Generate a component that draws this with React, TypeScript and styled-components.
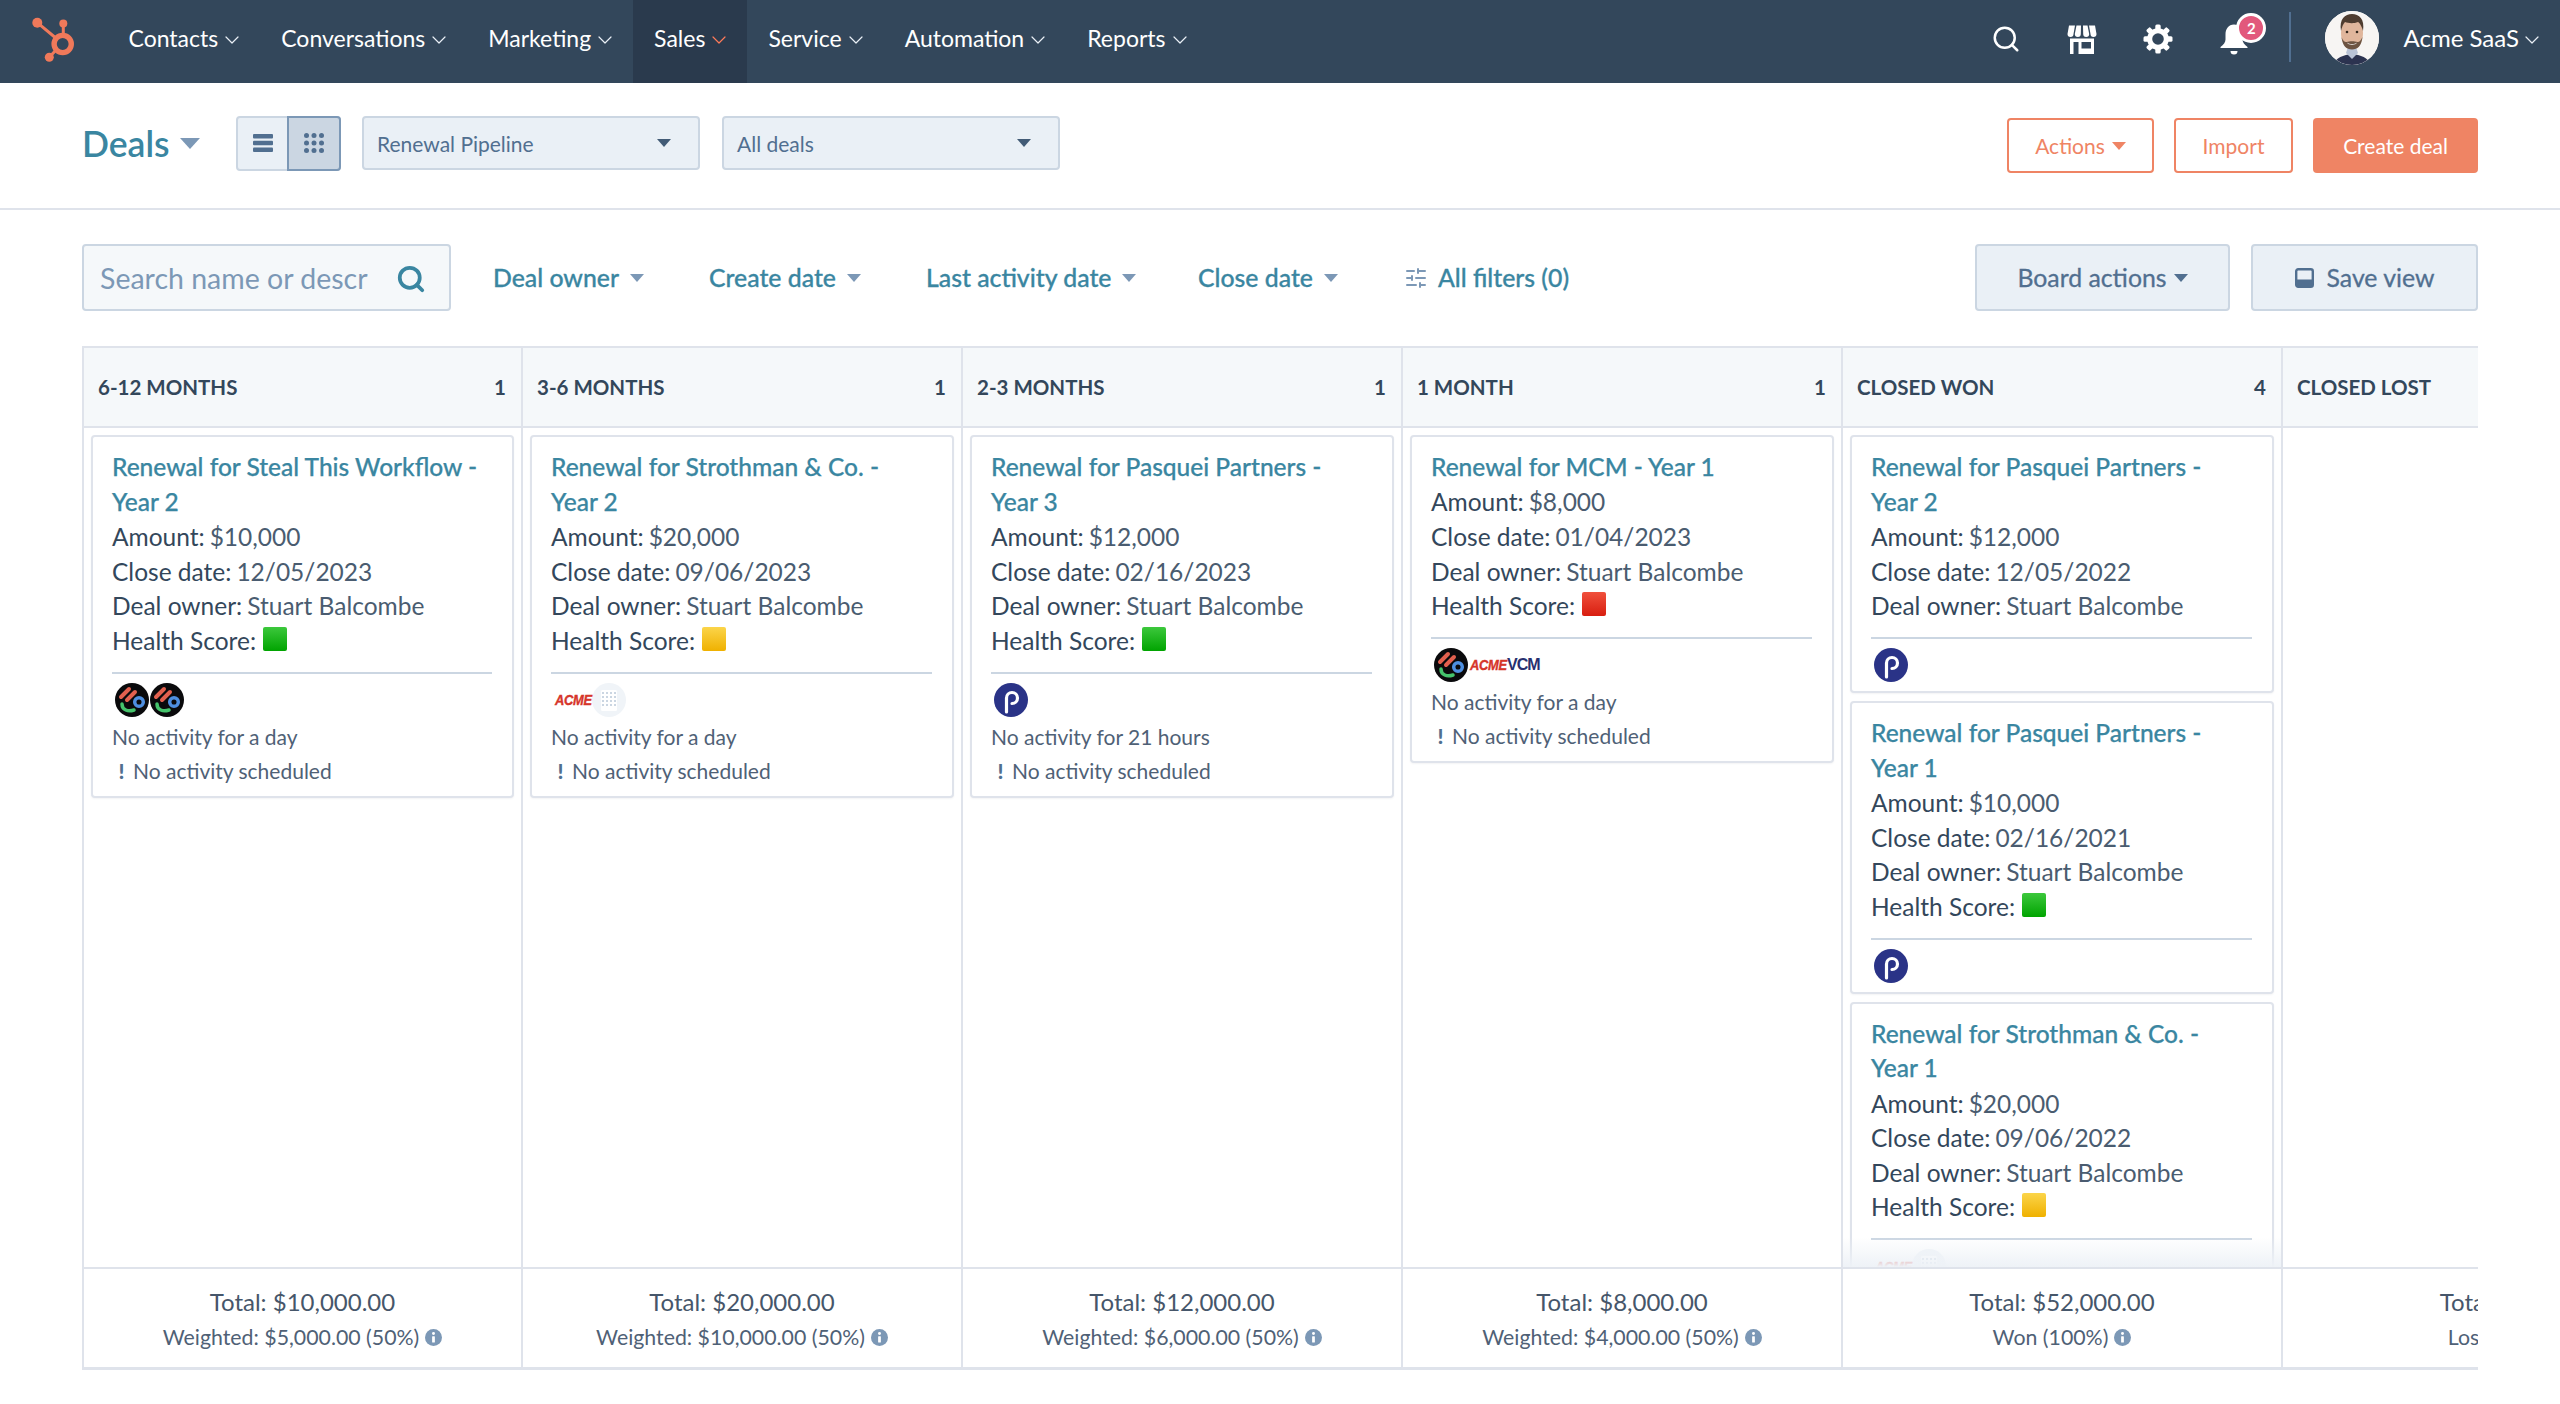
import React from 'react';
import styled, { createGlobalStyle } from 'styled-components';
import { ChevronDown, Search, SlidersHorizontal } from 'lucide-react';

const GlobalStyle = createGlobalStyle`
  html, body {
    margin: 0;
    padding: 0;
    background: #fff;
    font-family: Lato, "Noto Sans", sans-serif;
    color: #33475b;
  }
  * { box-sizing: border-box; }
`;

const Page = styled.div`
  width: 2560px;
  height: 1404px;
  overflow: hidden;
  display: flex;
  flex-direction: column;
  background: #fff;
`;

/* top navigation */
const NavBar = styled.nav`
  height: 83px;
  flex: none;
  background: #33475b;
  display: flex;
  align-items: stretch;
  padding-right: 22px;
`;

const LogoBox = styled.div`
  width: 107px;
  flex: none;
  display: flex;
  align-items: flex-start;
`;

const NavItem = styled.div<{ $active?: boolean }>`
  display: flex;
  align-items: center;
  gap: 8px;
  padding: 0 21.5px 8px;
  color: #fff;
  font-size: 23px;
  background: ${(p) => (p.$active ? '#2a3a4d' : 'transparent')};

  svg {
    color: ${(p) => (p.$active ? '#ff7a59' : '#eaf0f6')};
    margin: 4px -6px 0;
  }
`;

const NavRight = styled.div`
  margin-left: auto;
  display: flex;
  align-items: center;
`;

const IconButton = styled.div`
  position: relative;
  width: 76.3px;
  height: 83px;
  display: flex;
  align-items: center;
  justify-content: center;
  color: #fff;
  padding-bottom: 6px;
`;

const Badge = styled.span`
  position: absolute;
  left: 40px;
  top: 13px;
  width: 30px;
  height: 30px;
  border-radius: 50%;
  background: #e2587c;
  border: 3px solid #fff;
  color: #fff;
  font-size: 15px;
  font-weight: 700;
  display: flex;
  align-items: center;
  justify-content: center;
`;

const NavDivider = styled.div`
  width: 2px;
  height: 50px;
  background: #516f90;
  margin: 0 34px 9px 16px;
`;

const Avatar = styled.div`
  width: 54px;
  height: 54px;
  border-radius: 50%;
  overflow: hidden;
  background: #fff;
  margin-bottom: 8px;
  svg { display: block; }
`;

const AccountName = styled.div`
  margin: 0 0 8px 25px;
  display: flex;
  align-items: center;
  gap: 7px;
  color: #fff;
  font-size: 24px;

  svg {
    color: #eaf0f6;
    margin: 4px -6px 0;
  }
`;

/* page header */
const HeaderRow = styled.header`
  height: 127px;
  flex: none;
  display: flex;
  align-items: center;
  padding: 0 82px;
  border-bottom: 2px solid #dfe3eb;
`;

const HeaderInner = styled.div`
  flex: 1;
  display: flex;
  align-items: center;
  margin-top: -5px;
`;

const PageTitle = styled.div`
  display: flex;
  align-items: center;
  gap: 10px;
  width: 154px;
  color: #3a86a1;
  font-size: 35.5px;
  font-weight: 600;
`;

const Caret = styled.span<{ $color?: string; $size?: number }>`
  display: inline-block;
  flex: none;
  width: 0;
  height: 0;
  border-left: ${(p) => p.$size ?? 7}px solid transparent;
  border-right: ${(p) => p.$size ?? 7}px solid transparent;
  border-top: ${(p) => (p.$size ?? 7) + 1}px solid ${(p) => p.$color ?? '#7c98b6'};
`;

const Toggle = styled.div`
  display: flex;
  width: 105px;
  height: 55px;
  margin-right: 21px;
  border: 2px solid #cbd6e2;
  border-radius: 4px;
  background: #eaf0f6;
`;

const ToggleCell = styled.div<{ $active?: boolean }>`
  flex: 1;
  display: flex;
  align-items: center;
  justify-content: center;
  margin: ${(p) => (p.$active ? '-2px' : '0')};
  background: ${(p) => (p.$active ? '#cbd6e2' : 'transparent')};
  border: ${(p) => (p.$active ? '2px solid #7c98b6' : 'none')};
  border-radius: ${(p) => (p.$active ? '0 4px 4px 0' : '0')};
`;

const SelectBox = styled.div`
  width: 338px;
  height: 54px;
  margin-right: 22px;
  padding: 0 27px 0 13px;
  display: flex;
  align-items: center;
  justify-content: space-between;
  border: 2px solid #cbd6e2;
  border-radius: 4px;
  background: #eaf0f6;
  color: #516f90;
  font-size: 21px;
`;

const ActionGroup = styled.div`
  margin: 5px 0 0 auto;
  display: flex;
  align-items: center;
  gap: 20px;
`;

const OutlineButton = styled.div<{ $w: number }>`
  width: ${(p) => p.$w}px;
  height: 55px;
  display: flex;
  align-items: center;
  justify-content: center;
  gap: 7px;
  border: 2px solid #ef8464;
  border-radius: 4px;
  background: #fff;
  color: #ef8464;
  font-size: 21px;
`;

const PrimaryButton = styled.div`
  width: 165px;
  height: 55px;
  display: flex;
  align-items: center;
  justify-content: center;
  border-radius: 4px;
  background: #ef8464;
  color: #fff;
  font-size: 21px;
`;

/* filter bar */
const FilterBar = styled.div`
  height: 135px;
  flex: none;
  display: flex;
  align-items: center;
  padding: 0 82px;
`;

const SearchBox = styled.div`
  width: 369px;
  height: 67px;
  padding: 0 23px 0 16px;
  margin-right: 42px;
  display: flex;
  align-items: center;
  justify-content: space-between;
  border: 2px solid #cbd6e2;
  border-radius: 4px;
  background: #f5f8fa;
  color: #7c98b6;
  font-size: 28.5px;
  white-space: nowrap;
  svg { color: #3a86a1; margin-top: 3px; flex: none; }
`;

const FilterLink = styled.div<{ $w: number }>`
  width: ${(p) => p.$w}px;
  flex: none;
  display: flex;
  align-items: center;
  gap: 11px;
  color: #3a86a1;
  font-size: 24.8px;
  font-weight: 500;
  -webkit-text-stroke: 0.3px #3a86a1;
`;

const SliderIcon = styled.span`
  display: flex;
  color: #7c98b6;
  margin-right: -1px;
`;

const BoardButtons = styled.div`
  margin-left: auto;
  display: flex;
  gap: 21px;
`;

const GreyButton = styled.div<{ $w: number }>`
  width: ${(p) => p.$w}px;
  height: 67px;
  display: flex;
  align-items: center;
  justify-content: center;
  gap: ${(p) => (p.$w > 240 ? 7 : 13)}px;
  border: 2px solid #cbd6e2;
  border-radius: 4px;
  background: #eaf0f6;
  color: #516f90;
  font-size: 24.8px;
  -webkit-text-stroke: 0.3px #516f90;
`;

/* board */
const Board = styled.div`
  margin: 1px 82px 0;
  display: flex;
  overflow: hidden;
  height: 1024px;
  flex: none;
  border-left: 2px solid #dfe3eb;
  border-top: 2px solid #dfe3eb;
  border-bottom: 3px solid #dfe3eb;
`;

const Column = styled.section`
  width: 440px;
  flex: none;
  display: flex;
  flex-direction: column;
  border-right: 2px solid #dfe3eb;
  &:first-child { width: 439px; }
`;

const ColumnHead = styled.div`
  height: 80px;
  flex: none;
  padding: 0 15px 0 14px;
  display: flex;
  align-items: center;
  justify-content: space-between;
  background: #f5f8fa;
  border-bottom: 2px solid #dfe3eb;
  color: #33475b;
  font-size: 20.5px;
  font-weight: 700;
`;

const ColumnBody = styled.div`
  position: relative;
  flex: 1;
  min-height: 0;
  overflow: hidden;
  padding: 7px 7px 0;
  display: flex;
  flex-direction: column;
  gap: 8px;
`;

const BottomFade = styled.div`
  position: absolute;
  left: 0;
  right: 0;
  bottom: 0;
  height: 30px;
  background: linear-gradient(to bottom, rgba(238, 242, 247, 0), #eef2f7);
`;

const ColumnFoot = styled.div`
  height: 100px;
  flex: none;
  border-top: 2px solid #dfe3eb;
  display: flex;
  flex-direction: column;
  align-items: center;
  padding-top: 16px;
  white-space: nowrap;
`;

const FootTotal = styled.div`
  font-size: 24px;
  line-height: 34px;
  color: #46566a;
`;

const FootWeighted = styled.div`
  margin-top: 3px;
  display: flex;
  align-items: center;
  gap: 6px;
  font-size: 21.3px;
  line-height: 30px;
  color: #4f6176;
`;

const Card = styled.article`
  flex: none;
  padding: 13px 20px 8px 19px;
  border: 2px solid #dfe3eb;
  border-radius: 4px;
  background: #fff;
  box-shadow: 0 1px 2px rgba(45, 62, 80, 0.06);
`;

const CardTitle = styled.div`
  color: #3a86a1;
  font-size: 24.5px;
  line-height: 34.6px;
  font-weight: 500;
  white-space: pre-line;
  -webkit-text-stroke: 0.25px #3a86a1;
`;

const CardLine = styled.div`
  display: flex;
  align-items: center;
  gap: 5px;
  height: 34.6px;
  font-size: 24.5px;
  color: #33475b;
  white-space: pre;
`;

const LineValue = styled.span`
  color: #4a5c70;
`;

const HealthSquare = styled.span<{ $tone: 'green' | 'yellow' | 'red' }>`
  width: 24px;
  height: 24px;
  margin: -3px 0 0 2px;
  border-radius: 2px;
  background: ${(p) =>
    p.$tone === 'green'
      ? 'linear-gradient(#3cc83c, #00a400)'
      : p.$tone === 'yellow'
        ? 'linear-gradient(#fbd54a, #efb100)'
        : 'linear-gradient(#f0503c, #d81e10)'};
`;

const CardRule = styled.div`
  height: 2px;
  background: #cbd6e2;
  margin: 14px 0 9px;
`;

const LogoRow = styled.div<{ $tight: boolean }>`
  display: flex;
  align-items: center;
  height: 34px;
  padding-left: 3px;
  margin-bottom: ${(p) => (p.$tight ? 1 : 3)}px;
`;

const AcmeMark = styled.span`
  display: inline-block;
  width: 34px;
  margin: 0 3px 0 1px;
  color: #d6352a;
  font-family: "Liberation Sans", sans-serif;
  font-size: 15px;
  font-weight: 700;
  font-style: italic;
  letter-spacing: -0.3px;
  -webkit-text-stroke: 0.4px #d6352a;
  transform: scaleX(0.86);
  transform-origin: left center;
`;

const VcmMark = styled.span`
  color: #27306f;
  font-family: "Liberation Sans", sans-serif;
  font-size: 16px;
  font-weight: 700;
  letter-spacing: -1px;
`;

const ActivityLine = styled.div`
  height: 34px;
  display: flex;
  align-items: center;
  gap: 6px;
  font-size: 21px;
  color: #4f6176;
`;

const Alert = styled.span`
  width: 11px;
  margin-left: 4px;
  text-align: center;
  font-weight: 900;
  color: #516f90;
`;

/* drawings */
const HubLogo = () => (
  <svg width="107" height="83" viewBox="0 0 107 83" fill="none">
    <g stroke="#f0795a">
      <circle cx="62.7" cy="44" r="8.6" strokeWidth="5.4" />
      <path d="M63.3 24V36M37.3 22.7L57 39M49.3 57.3L56 50" strokeWidth="3" />
    </g>
    <g fill="#f0795a">
      <circle cx="63.3" cy="23.5" r="4" />
      <circle cx="37.3" cy="22.7" r="5" />
      <circle cx="49.3" cy="57.3" r="4.5" />
    </g>
  </svg>
);

const StoreIcon = () => (
  <svg width="32" height="32" viewBox="0 0 32 32">
    <path d="M3 2.5h6L7.5 11a3 3 0 0 1-6 0zM10.5 2.5h4.5L14.8 11a3 3 0 0 1-6 0zM17 2.5h4.5L23.2 11a3 3 0 0 1-6 0zM23 2.5h6L30.5 11a3 3 0 0 1-6 0z" fill="#fff" />
    <path fillRule="evenodd" d="M4 15.500h24V31H4zM7.5 19v12h5V19zM15.5 19v6.500H25V19z" fill="#fff" />
  </svg>
);

const GearIcon = () => (
  <svg width="30" height="30" viewBox="0 0 30 30">
    <circle cx="15" cy="15" r="8.3" fill="none" stroke="#fff" strokeWidth="5" />
    <g fill="#fff">
      {[0, 45, 90, 135, 180, 225, 270, 315].map((a) => (
        <rect key={a} x="12.3" y="0.5" width="5.4" height="6" rx="1.5" transform={`rotate(${a} 15 15)`} />
      ))}
    </g>
  </svg>
);

const BellIcon = () => (
  <svg width="30" height="32" viewBox="0 0 30 32">
    <path d="M15 1.5c-5.500 0-8.500 4.500-8.500 10v5c0 3-2 5-5 7.500v1h27v-1c-3-2.500-5-4.500-5-7.500v-5c0-5.500-3-10-8.500-10z" fill="#fff" />
    <path d="M11.5 28h7a3.500 3.500 0 0 1-7 0z" fill="#fff" />
  </svg>
);

const Portrait = () => (
  <svg width="54" height="54" viewBox="0 0 54 54">
    <rect width="54" height="54" fill="#f7f5f3" />
    <path d="M8 56c1-9 10-12 19-13 9 1 18 4 19 13z" fill="#2c3350" />
    <path d="M21 42l6 6 6-6-2-6h-8z" fill="#b9c3d6" />
    <ellipse cx="27" cy="22" rx="11" ry="16" fill="#e0b69c" />
    <path d="M16 20c-2-12 4-17 11-17s13 5 11 17c-1-4-3-8-5-9-5 2-10 1-13 0-2 2-3 5-4 9z" fill="#4f3d30" />
    <path d="M16.5 26c1 9 5 12.500 10.500 12.500S36.500 35 37.500 26c-2 4-3 5-5 5-3-1-8-1-11 0-2 0-3.500-1-5-5z" fill="#6d5442" />
    <path d="M22 31.5c3 2 7 2 10 0-1 3-9 3-10 0z" fill="#fff" />
    <circle cx="22" cy="21" r="1.3" fill="#33281f" />
    <circle cx="32" cy="21" r="1.3" fill="#33281f" />
  </svg>
);

const ListGlyph = () => (
  <svg width="22" height="22" viewBox="0 0 22 22" fill="#516f90">
    <rect x="1" y="2" width="20" height="4.5" rx="1" />
    <rect x="1" y="8.8" width="20" height="4.5" rx="1" />
    <rect x="1" y="15.6" width="20" height="4.5" rx="1" />
  </svg>
);

const GridGlyph = () => (
  <svg width="22" height="22" viewBox="0 0 22 22" fill="#516f90">
    {[3.5, 11, 18.5].map((y) =>
      [3.5, 11, 18.5].map((x) => <circle key={`${x}-${y}`} cx={x} cy={y} r="2.5" />),
    )}
  </svg>
);

const SaveGlyph = () => (
  <svg width="19" height="20" viewBox="0 0 19 20" fill="none">
    <rect x="1.2" y="1.2" width="16.6" height="17.6" rx="2" stroke="#516f90" strokeWidth="2.4" />
    <rect x="1.2" y="11.5" width="16.6" height="7.3" fill="#516f90" />
  </svg>
);

const InfoGlyph = () => (
  <svg width="17" height="17" viewBox="0 0 16 16">
    <circle cx="8" cy="8" r="8" fill="#7c98b6" />
    <circle cx="8" cy="4.3" r="1.4" fill="#fff" />
    <rect x="6.7" y="6.8" width="2.6" height="6" rx="0.6" fill="#fff" />
  </svg>
);

const ColorCircle = () => (
  <svg width="34" height="34" viewBox="0 0 34 34" fill="none" style={{ flex: 'none', marginRight: 1 }}>
    <circle cx="17" cy="17" r="17" fill="#0a0a0c" />
    <path d="M6 14L14 6M12 17L20 9" stroke="#e2604e" strokeWidth="4" strokeLinecap="round" />
    <circle cx="24" cy="19" r="4.3" stroke="#4e8fe0" strokeWidth="3.5" />
    <path d="M7 21c0 6 6 8 12 6" stroke="#45c46c" strokeWidth="3.5" strokeLinecap="round" />
  </svg>
);

const PasqueiCircle = () => (
  <svg width="34" height="34" viewBox="0 0 34 34" fill="none">
    <circle cx="17" cy="17" r="17" fill="#2a3387" />
    <path d="M12.5 29V15a5.500 5.500 0 1 1 5.500 5.500" stroke="#fff" strokeWidth="3.2" strokeLinecap="round" />
  </svg>
);

const BuildingCircle = () => (
  <svg width="34" height="34" viewBox="0 0 34 34">
    <circle cx="17" cy="17" r="17" fill="#f0f4f8" />
    <rect x="9" y="7" width="16" height="21" rx="1.5" fill="#fff" />
    <g fill="#cbd6e2">
      {[10, 14, 18, 22].map((y) =>
        [11, 15, 19, 23].map((x) => <rect key={`${x}-${y}`} x={x - 1} y={y - 1} width="2" height="2" />),
      )}
    </g>
  </svg>
);

type Tone = 'green' | 'yellow' | 'red';
type LogoKind = 'color' | 'pasquei' | 'acme' | 'building' | 'vcm';

interface Deal {
  title: string;
  amount: string;
  close: string;
  health?: Tone;
  logos: LogoKind[];
  activity?: string;
}

interface Stage {
  name: string;
  count?: number;
  total: string;
  weighted: string;
  deals: Deal[];
  fade?: boolean;
}

const stages: Stage[] = [
  {
    name: '6-12 MONTHS',
    count: 1,
    total: 'Total: $10,000.00',
    weighted: 'Weighted: $5,000.00 (50%)',
    deals: [
      { title: 'Renewal for Steal This Workflow -\nYear 2', amount: '$10,000', close: '12/05/2023', health: 'green', logos: ['color', 'color'], activity: 'No activity for a day' },
    ],
  },
  {
    name: '3-6 MONTHS',
    count: 1,
    total: 'Total: $20,000.00',
    weighted: 'Weighted: $10,000.00 (50%)',
    deals: [
      { title: 'Renewal for Strothman & Co. -\nYear 2', amount: '$20,000', close: '09/06/2023', health: 'yellow', logos: ['acme', 'building'], activity: 'No activity for a day' },
    ],
  },
  {
    name: '2-3 MONTHS',
    count: 1,
    total: 'Total: $12,000.00',
    weighted: 'Weighted: $6,000.00 (50%)',
    deals: [
      { title: 'Renewal for Pasquei Partners -\nYear 3', amount: '$12,000', close: '02/16/2023', health: 'green', logos: ['pasquei'], activity: 'No activity for 21 hours' },
    ],
  },
  {
    name: '1 MONTH',
    count: 1,
    total: 'Total: $8,000.00',
    weighted: 'Weighted: $4,000.00 (50%)',
    deals: [
      { title: 'Renewal for MCM - Year 1', amount: '$8,000', close: '01/04/2023', health: 'red', logos: ['color', 'acme', 'vcm'], activity: 'No activity for a day' },
    ],
  },
  {
    name: 'CLOSED WON',
    count: 4,
    total: 'Total: $52,000.00',
    weighted: 'Won (100%)',
    fade: true,
    deals: [
      { title: 'Renewal for Pasquei Partners -\nYear 2', amount: '$12,000', close: '12/05/2022', logos: ['pasquei'] },
      { title: 'Renewal for Pasquei Partners -\nYear 1', amount: '$10,000', close: '02/16/2021', health: 'green', logos: ['pasquei'] },
      { title: 'Renewal for Strothman & Co. -\nYear 1', amount: '$20,000', close: '09/06/2022', health: 'yellow', logos: ['acme', 'building'] },
    ],
  },
  {
    name: 'CLOSED LOST',
    total: 'Total: $0.00',
    weighted: 'Lost (0%)',
    deals: [],
  },
];

const renderLogo = (kind: LogoKind, i: number) => {
  if (kind === 'color') return <ColorCircle key={i} />;
  if (kind === 'pasquei') return <PasqueiCircle key={i} />;
  if (kind === 'building') return <BuildingCircle key={i} />;
  if (kind === 'acme') return <AcmeMark key={i}>ACME</AcmeMark>;
  return <VcmMark key={i}>VCM</VcmMark>;
};

const DealCard: React.FC<{ deal: Deal }> = ({ deal }) => (
  <Card>
    <CardTitle>{deal.title}</CardTitle>
    <CardLine>
      Amount:<LineValue>{deal.amount}</LineValue>
    </CardLine>
    <CardLine>
      Close date:<LineValue>{deal.close}</LineValue>
    </CardLine>
    <CardLine>
      Deal owner:<LineValue>Stuart Balcombe</LineValue>
    </CardLine>
    {deal.health && (
      <CardLine>
        Health Score:<HealthSquare $tone={deal.health} />
      </CardLine>
    )}
    <CardRule />
    <LogoRow $tight={!deal.activity}>{deal.logos.map(renderLogo)}</LogoRow>
    {deal.activity && (
      <>
        <ActivityLine>{deal.activity}</ActivityLine>
        <ActivityLine>
          <Alert>!</Alert>
          No activity scheduled
        </ActivityLine>
      </>
    )}
  </Card>
);

const navItems = ['Contacts', 'Conversations', 'Marketing', 'Sales', 'Service', 'Automation', 'Reports'];

const App: React.FC = () => (
  <Page>
    <GlobalStyle />
    <NavBar>
      <LogoBox>
        <HubLogo />
      </LogoBox>
      {navItems.map((item) => (
        <NavItem key={item} $active={item === 'Sales'}>
          {item}
          <ChevronDown size={24} strokeWidth={1.2} />
        </NavItem>
      ))}
      <NavRight>
        <IconButton>
          <Search size={30} strokeWidth={2} />
        </IconButton>
        <IconButton>
          <StoreIcon />
        </IconButton>
        <IconButton>
          <GearIcon />
        </IconButton>
        <IconButton>
          <BellIcon />
          <Badge>2</Badge>
        </IconButton>
        <NavDivider />
        <Avatar>
          <Portrait />
        </Avatar>
        <AccountName>
          Acme SaaS
          <ChevronDown size={24} strokeWidth={1.2} />
        </AccountName>
      </NavRight>
    </NavBar>

    <HeaderRow>
      <HeaderInner>
        <PageTitle>
          Deals
          <Caret $size={10} />
        </PageTitle>
        <Toggle>
          <ToggleCell>
            <ListGlyph />
          </ToggleCell>
          <ToggleCell $active>
            <GridGlyph />
          </ToggleCell>
        </Toggle>
        <SelectBox>
          Renewal Pipeline
          <Caret $color="#425b76" />
        </SelectBox>
        <SelectBox>
          All deals
          <Caret $color="#425b76" />
        </SelectBox>
        <ActionGroup>
          <OutlineButton $w={147}>
            Actions
            <Caret $color="#ef8464" />
          </OutlineButton>
          <OutlineButton $w={119}>Import</OutlineButton>
          <PrimaryButton>Create deal</PrimaryButton>
        </ActionGroup>
      </HeaderInner>
    </HeaderRow>

    <FilterBar>
      <SearchBox>
        Search name or descr
        <Search size={30} strokeWidth={3} />
      </SearchBox>
      <FilterLink $w={216}>
        Deal owner
        <Caret />
      </FilterLink>
      <FilterLink $w={217}>
        Create date
        <Caret />
      </FilterLink>
      <FilterLink $w={272}>
        Last activity date
        <Caret />
      </FilterLink>
      <FilterLink $w={206}>
        Close date
        <Caret />
      </FilterLink>
      <FilterLink $w={200}>
        <SliderIcon>
          <SlidersHorizontal size={24} strokeWidth={2} />
        </SliderIcon>
        All filters (0)
      </FilterLink>
      <BoardButtons>
        <GreyButton $w={255}>
          Board actions
          <Caret $color="#516f90" />
        </GreyButton>
        <GreyButton $w={227}>
          <SaveGlyph />
          Save view
        </GreyButton>
      </BoardButtons>
    </FilterBar>

    <Board>
      {stages.map((stage) => (
        <Column key={stage.name}>
          <ColumnHead>
            <span>{stage.name}</span>
            {stage.count !== undefined && <span>{stage.count}</span>}
          </ColumnHead>
          <ColumnBody>
            {stage.deals.map((deal) => (
              <DealCard key={deal.title} deal={deal} />
            ))}
            {stage.fade && <BottomFade />}
          </ColumnBody>
          <ColumnFoot>
            <FootTotal>{stage.total}</FootTotal>
            <FootWeighted>
              {stage.weighted}
              <InfoGlyph />
            </FootWeighted>
          </ColumnFoot>
        </Column>
      ))}
    </Board>
  </Page>
);

export default App;
